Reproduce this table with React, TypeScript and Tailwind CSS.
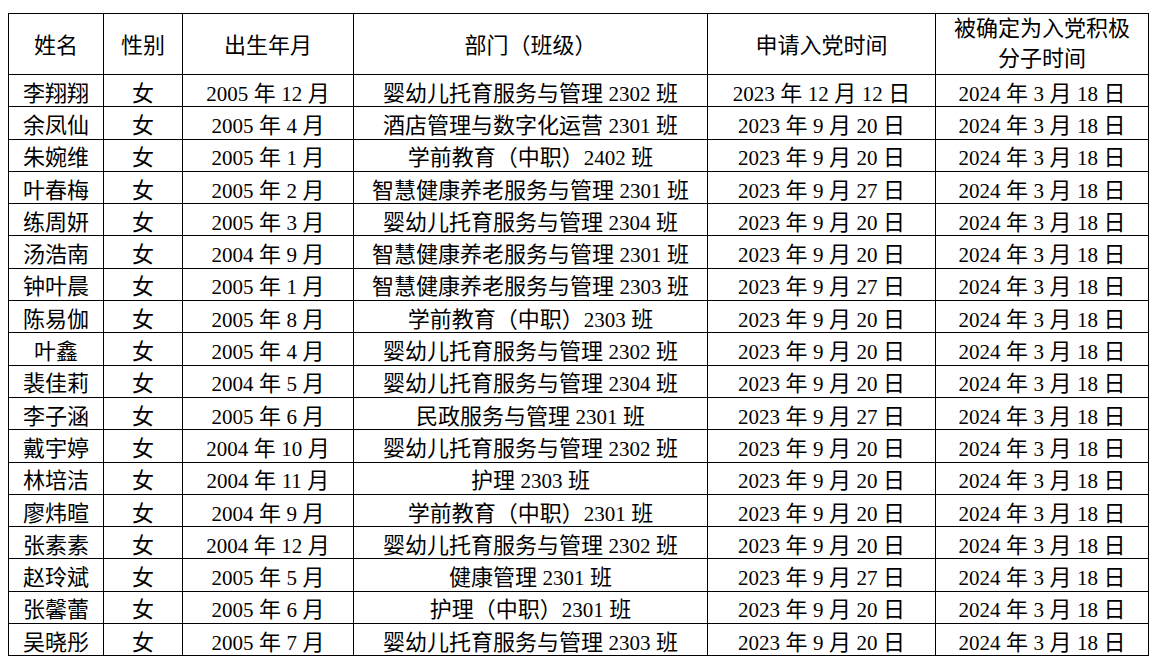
const rows: [string, string, string, string, string, string][] = [
  ["李翔翔", "女", "2005 年 12 月", "婴幼儿托育服务与管理 2302 班", "2023 年 12 月 12 日", "2024 年 3 月 18 日"],
  ["余凤仙", "女", "2005 年 4 月", "酒店管理与数字化运营 2301 班", "2023 年 9 月 20 日", "2024 年 3 月 18 日"],
  ["朱婉维", "女", "2005 年 1 月", "学前教育（中职）2402 班", "2023 年 9 月 20 日", "2024 年 3 月 18 日"],
  ["叶春梅", "女", "2005 年 2 月", "智慧健康养老服务与管理 2301 班", "2023 年 9 月 27 日", "2024 年 3 月 18 日"],
  ["练周妍", "女", "2005 年 3 月", "婴幼儿托育服务与管理 2304 班", "2023 年 9 月 20 日", "2024 年 3 月 18 日"],
  ["汤浩南", "女", "2004 年 9 月", "智慧健康养老服务与管理 2301 班", "2023 年 9 月 20 日", "2024 年 3 月 18 日"],
  ["钟叶晨", "女", "2005 年 1 月", "智慧健康养老服务与管理 2303 班", "2023 年 9 月 27 日", "2024 年 3 月 18 日"],
  ["陈易伽", "女", "2005 年 8 月", "学前教育（中职）2303 班", "2023 年 9 月 20 日", "2024 年 3 月 18 日"],
  ["叶鑫", "女", "2005 年 4 月", "婴幼儿托育服务与管理 2302 班", "2023 年 9 月 20 日", "2024 年 3 月 18 日"],
  ["裴佳莉", "女", "2004 年 5 月", "婴幼儿托育服务与管理 2304 班", "2023 年 9 月 20 日", "2024 年 3 月 18 日"],
  ["李子涵", "女", "2005 年 6 月", "民政服务与管理 2301 班", "2023 年 9 月 27 日", "2024 年 3 月 18 日"],
  ["戴宇婷", "女", "2004 年 10 月", "婴幼儿托育服务与管理 2302 班", "2023 年 9 月 20 日", "2024 年 3 月 18 日"],
  ["林培洁", "女", "2004 年 11 月", "护理 2303 班", "2023 年 9 月 20 日", "2024 年 3 月 18 日"],
  ["廖炜暄", "女", "2004 年 9 月", "学前教育（中职）2301 班", "2023 年 9 月 20 日", "2024 年 3 月 18 日"],
  ["张素素", "女", "2004 年 12 月", "婴幼儿托育服务与管理 2302 班", "2023 年 9 月 20 日", "2024 年 3 月 18 日"],
  ["赵玲斌", "女", "2005 年 5 月", "健康管理 2301 班", "2023 年 9 月 27 日", "2024 年 3 月 18 日"],
  ["张馨蕾", "女", "2005 年 6 月", "护理（中职）2301 班", "2023 年 9 月 20 日", "2024 年 3 月 18 日"],
  ["吴晓彤", "女", "2005 年 7 月", "婴幼儿托育服务与管理 2303 班", "2023 年 9 月 20 日", "2024 年 3 月 18 日"],
];

// digits are set a touch smaller than the CJK text, as in the source document
const Mixed = ({ text }: { text: string }) => (
  <>
    {text.split(/(\d+)/).map((part, k) =>
      /^\d+$/.test(part) ? (
        <span key={k} className="text-[21px] leading-[0]">
          {part}
        </span>
      ) : (
        part
      )
    )}
  </>
);

const App = () => {
  return (
    <div className="min-h-screen bg-white pl-2 pt-[13px] text-black font-['Liberation_Serif','Noto_Sans_CJK_SC',serif]">
      <table className="table-fixed border-collapse w-[1140px] text-[22px]">
        <colgroup>
          <col className="w-[95px]" />
          <col className="w-[79px]" />
          <col className="w-[171px]" />
          <col className="w-[354px]" />
          <col className="w-[228px]" />
          <col className="w-[213px]" />
        </colgroup>
        <thead>
          <tr className="h-[61px]">
            <th className="border border-black font-normal leading-[24px] pt-[4px]">姓名</th>
            <th className="border border-black font-normal leading-[24px] pt-[4px]">性别</th>
            <th className="border border-black font-normal leading-[24px] pt-[4px]">出生年月</th>
            <th className="border border-black font-normal leading-[24px] pt-[4px]">部门（班级）</th>
            <th className="border border-black font-normal leading-[24px] pt-[4px]">申请入党时间</th>
            <th className="border border-black font-normal leading-[30px] p-0">
              被确定为入党积极
              <br />
              分子时间
            </th>
          </tr>
        </thead>
        <tbody>
          {rows.map((r, i) => (
            <tr key={i} className="h-[32.3px]">
              {r.map((c, j) => (
                <td key={j} className="border border-black text-center p-0 pt-[6px] leading-[24px] whitespace-nowrap">
                  <Mixed text={c} />
                </td>
              ))}
            </tr>
          ))}
        </tbody>
      </table>
    </div>
  );
};

export default App;
